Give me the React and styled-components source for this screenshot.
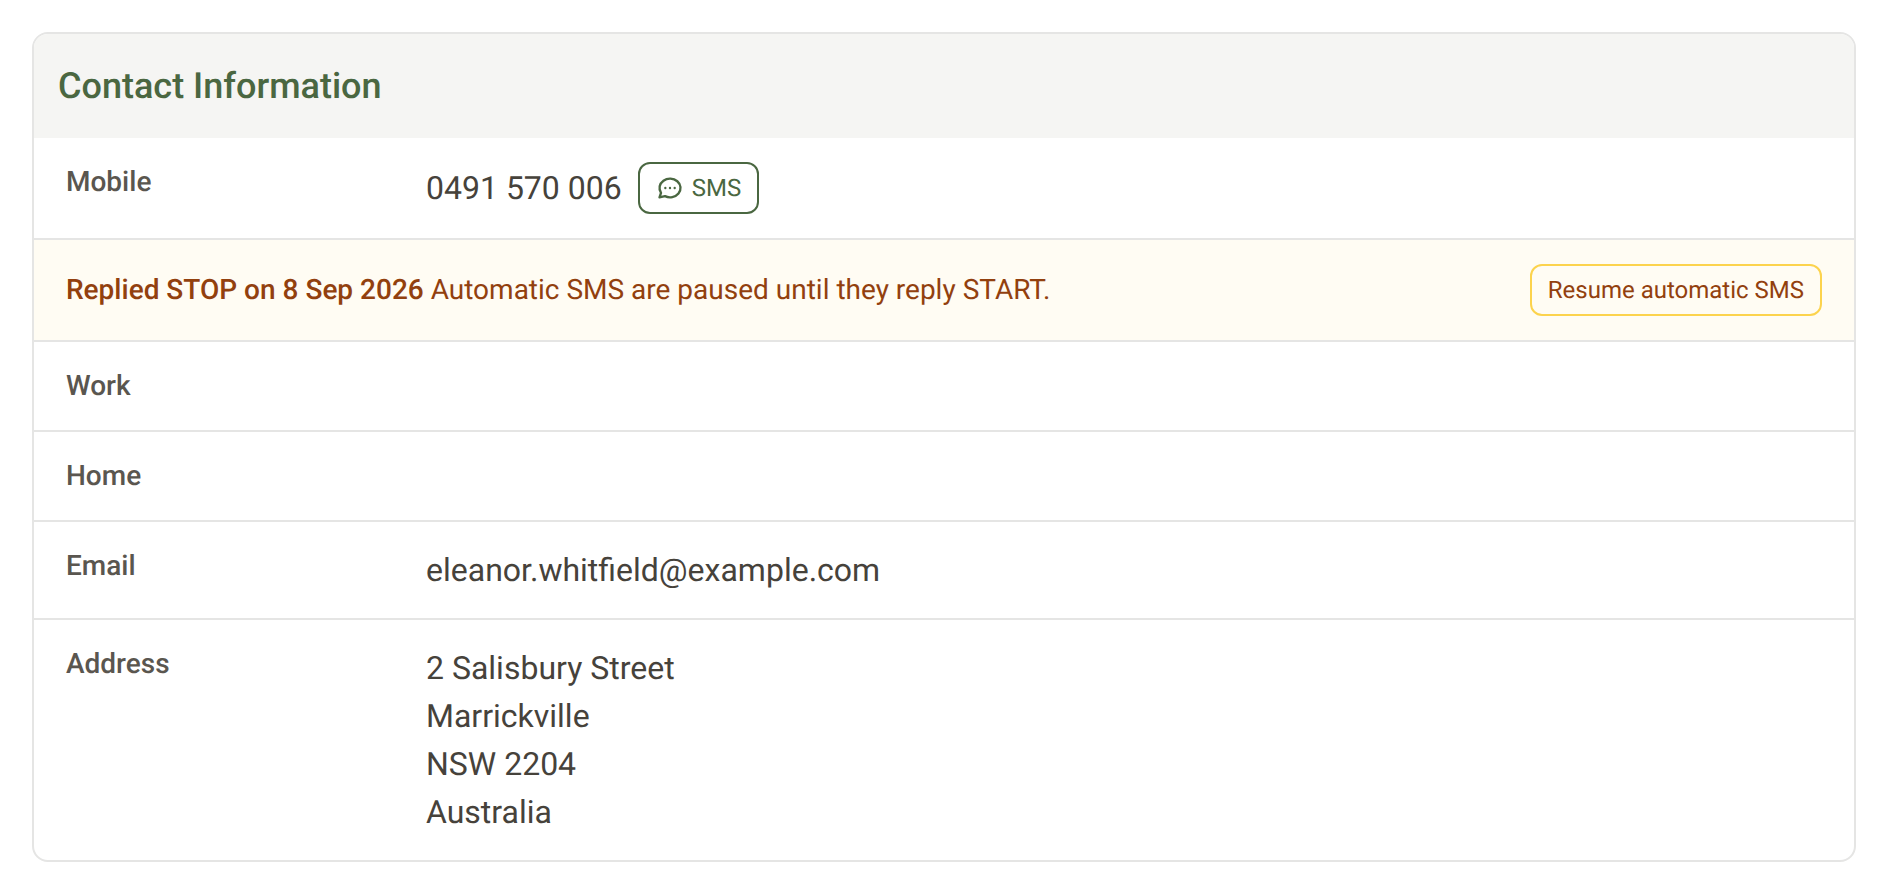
import React from "react";
import styled, { createGlobalStyle } from "styled-components";

function MessageIcon() {
    return (
        <Icon viewBox="0 0 24 24" aria-hidden="true">
            <path d="M3 20l1.3 -3.9c-2.324 -3.437 -1.426 -7.872 2.1 -10.374c3.526 -2.501 8.59 -2.296 11.845 .48c3.255 2.777 3.695 7.266 1.029 10.501c-2.666 3.235 -7.615 4.215 -11.574 2.293l-4.7 1" />
            <path d="M12 12v.01" />
            <path d="M8 12v.01" />
            <path d="M16 12v.01" />
        </Icon>
    );
}

function Field({ label, children }) {
    return (
        <Row>
            <Label>{label}</Label>
            <Value>{children}</Value>
        </Row>
    );
}

function App() {
    return (
        <>
            <GlobalStyle />
            <Page>
                <Card>
                    <Header>
                        <h2>Contact Information</h2>
                    </Header>
                    <Fields>
                        <Field label="Mobile">
                            <Phone>
                                <span>0491 570 006</span>
                                <SmsButton type="button">
                                    <MessageIcon />
                                    SMS
                                </SmsButton>
                            </Phone>
                        </Field>
                    </Fields>
                    <Notice>
                        <p>
                            <strong>Replied STOP on 8 Sep 2026</strong> Automatic
                            SMS are paused until they reply START.
                        </p>
                        <ResumeButton type="button">
                            Resume automatic SMS
                        </ResumeButton>
                    </Notice>
                    <Fields>
                        <Field label="Work" />
                        <Field label="Home" />
                        <Field label="Email">
                            eleanor.whitfield@example.com
                        </Field>
                        <Field label="Address">
                            <Line>2 Salisbury Street</Line>
                            <Line>Marrickville</Line>
                            <Line>NSW 2204</Line>
                            <Line>Australia</Line>
                        </Field>
                    </Fields>
                </Card>
            </Page>
        </>
    );
}

export default App;

const GlobalStyle = createGlobalStyle`
    * {
        box-sizing: border-box;
    }
    body {
        margin: 0;
        background: white;
        font-family: Roboto, sans-serif;
        text-rendering: geometricPrecision;
    }
    h2, p, dl, dd {
        margin: 0;
    }
`;

const Page = styled.main`
    padding: 32px;
`;

const Card = styled.section`
    border: 2px solid #e5e5e4;
    border-radius: 16px;
    overflow: hidden;
`;

const Header = styled.header`
    padding: 24px;
    background: #f5f5f3;

    h2 {
        color: #4a6741;
        font-size: 36px;
        font-weight: 500;
        line-height: 56px;
    }
`;

const Fields = styled.dl``;

const Row = styled.div`
    display: grid;
    grid-template-columns: 344px 1fr;
    align-items: start;
    gap: 16px;
    padding: 24px 32px;

    & + & {
        border-top: 2px solid #e5e5e4;
    }
`;

const Label = styled.dt`
    color: #5a564f;
    font-size: 28px;
    font-weight: 500;
    line-height: 40px;
`;

const Value = styled.dd`
    color: #46423b;
    font-size: 32px;
    line-height: 48px;
`;

const Line = styled.div``;

const Phone = styled.div`
    display: flex;
    align-items: center;
    gap: 16px;
`;

const Notice = styled.div`
    display: flex;
    justify-content: space-between;
    align-items: center;
    gap: 24px;
    padding: 24px 32px;
    border-top: 2px solid #e5e5e4;
    border-bottom: 2px solid #e5e5e4;
    background: #fffcf3;
    color: #92400e;
    font-size: 28px;
    line-height: 40px;

    strong {
        font-weight: 500;
    }
`;

const Button = styled.button`
    display: flex;
    align-items: center;
    gap: 8px;
    flex-shrink: 0;
    height: 52px;
    padding: 0 16px;
    border: 2px solid;
    border-radius: 12px;
    background: transparent;
    font-family: inherit;
    font-size: 24px;
    line-height: 32px;
    text-rendering: inherit;
    cursor: pointer;
`;

const SmsButton = styled(Button)`
    border-color: #4a6741;
    color: #4a6741;
`;

const ResumeButton = styled(Button)`
    border-color: #fcd34d;
    color: #92400e;
`;

const Icon = styled.svg`
    width: 28px;
    height: 28px;
    fill: none;
    stroke: currentColor;
    stroke-width: 2;
    stroke-linecap: round;
    stroke-linejoin: round;
`;
